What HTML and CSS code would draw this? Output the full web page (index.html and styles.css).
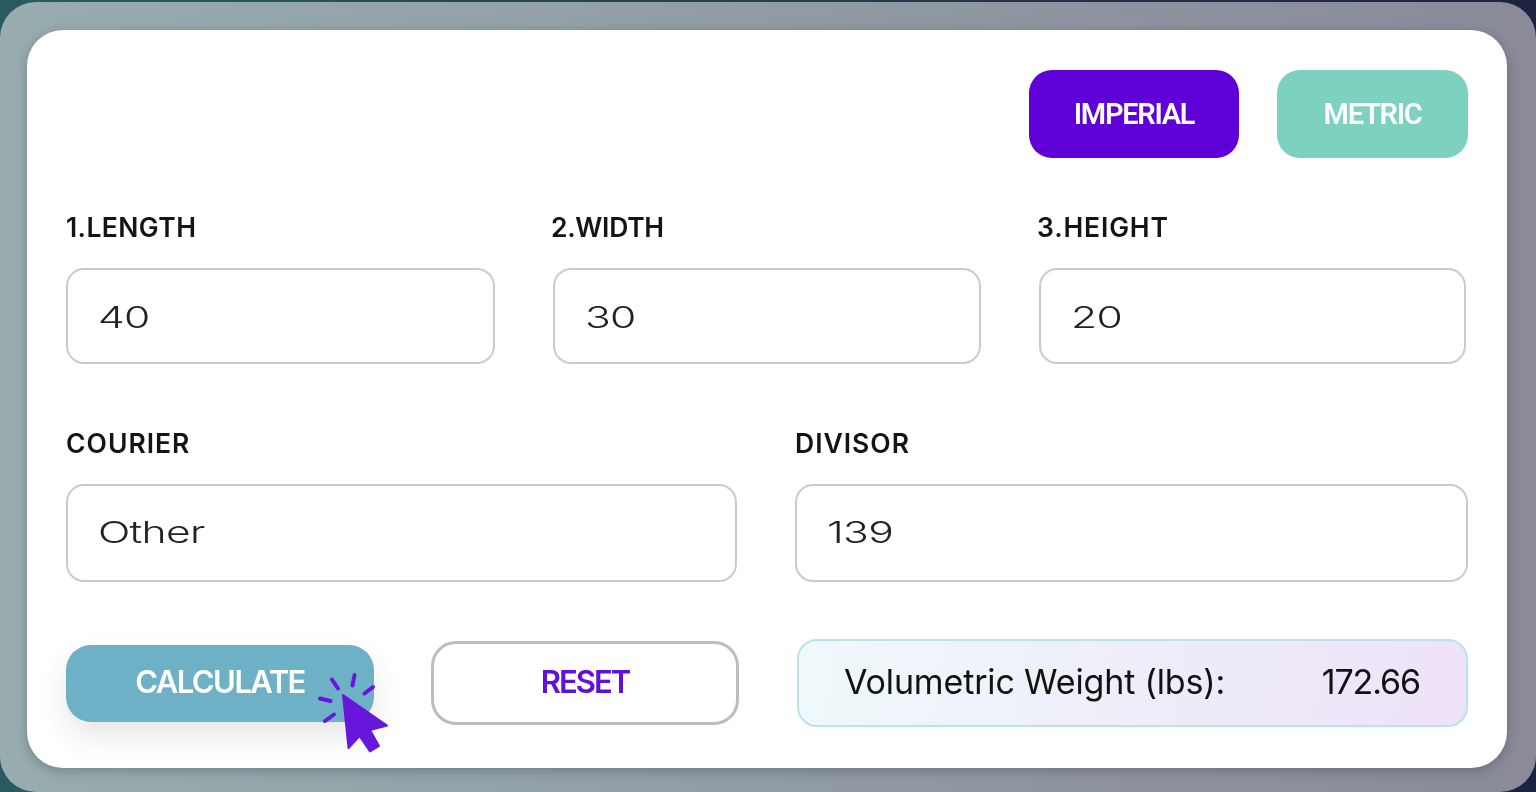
FILE: index.html
```html
<!DOCTYPE html>
<html lang="en">
<head>
<meta charset="utf-8">
<title>Volumetric Weight Calculator</title>
<link rel="stylesheet" href="styles.css">
</head>
<body>
<div class="frame">
  <main class="card">
    <div class="units">
      <button class="unit imperial"><span>IMPERIAL</span></button>
      <button class="unit metric"><span>METRIC</span></button>
    </div>
    <div class="dims">
      <div class="field"><div class="label">1.LENGTH</div><div class="input"><span class="val">40</span></div></div>
      <div class="field"><div class="label shift narrow">2.WIDTH</div><div class="input"><span class="val">30</span></div></div>
      <div class="field"><div class="label shift wide">3.HEIGHT</div><div class="input"><span class="val">20</span></div></div>
    </div>
    <div class="opts">
      <div class="field"><div class="label wider">COURIER</div><div class="input tall"><span class="val">Other</span></div></div>
      <div class="field"><div class="label wider">DIVISOR</div><div class="input tall"><span class="val">139</span></div></div>
    </div>
    <div class="actions">
      <div class="btns">
        <button class="calc"><span>CALCULATE</span>
          <svg class="cursor" viewBox="0 0 80 85" width="80" height="85" aria-hidden="true">
            <path d="M28 25L72 55.500L55 60L64 76L55 81.500L44.500 66L33.500 78Z" fill="#6717db" stroke="#6717db" stroke-width="2" stroke-linejoin="round"/>
            <g stroke="#6717db" stroke-width="4" stroke-linecap="round" fill="none">
              <path d="M17 9.500L23 18.500"/>
              <path d="M39.500 5L37.500 15.500"/>
              <path d="M58 17L49.500 23.500"/>
              <path d="M5 28.500L15.500 31"/>
              <path d="M19 44.500L10 51"/>
            </g>
          </svg>
        </button>
        <button class="reset"><span>RESET</span></button>
      </div>
      <div class="result"><span class="rl">Volumetric Weight (lbs):</span><span class="rv">172.66</span></div>
    </div>
  </main>
</div>
</body>
</html>
```
FILE: styles.css
```css
* { box-sizing: border-box; }
html, body { margin: 0; height: 792px; overflow: hidden; }
body {
  background: linear-gradient(90deg, #2c5a63 0%, #1b2340 100%);
  padding-top: 2px;
  font-family: Inter, "Liberation Sans", sans-serif;
}
.frame {
  height: 790px;
  border-radius: 36px;
  padding: 28px 29px 24px 27px;
  background: linear-gradient(90deg, #98adb0 0%, #8a8a98 100%);
}
.card {
  height: 738px;
  background: #fff;
  border-radius: 36px;
  padding: 40px 39px 0 39px;
  box-shadow: 0 3px 12px rgba(40, 50, 60, .32);
  filter: blur(.45px);
}
.units { display: flex; justify-content: flex-end; gap: 38px; height: 88px; }
button { border: 0; padding: 0; font: inherit; display: block; }
.unit {
  height: 88px; border-radius: 23px; color: #fff;
  font-family: Roboto, sans-serif; font-weight: 600; font-size: 29px; letter-spacing: -1.300px;
}
.imperial { width: 210px; background: #5e00d7; }
.metric { width: 191px; background: #7dd2bf; }
.dims { display: grid; grid-template-columns: 429px 428px 427px; gap: 58px; margin-top: 54px; }
.opts { display: grid; grid-template-columns: 671px 673px; gap: 58px; margin-top: 64px; }
.label {
  height: 30px; line-height: 30px; font-size: 26.500px; font-weight: 600; color: #141414;
  letter-spacing: .4px; white-space: nowrap; margin-bottom: 26px;
}
.shift { margin-left: -2px; }
.narrow { letter-spacing: -.3px; }
.wide { letter-spacing: .85px; }
.wider { letter-spacing: 1px; }
.input {
  height: 96px; border: 2px solid #cbcbc9; border-radius: 18px; padding: 2px 0 0 30px;
  display: flex; align-items: center; background: #fff;
}
.tall { height: 98px; padding: 0 0 2px 30px; }
.val {
  display: inline-block; font-family: Inter, sans-serif; font-weight: 300; font-size: 30px; color: #222;
  transform: scaleX(1.420); transform-origin: left center; letter-spacing: -.500px;
}
.actions { display: flex; justify-content: space-between; align-items: center; margin-top: 57px; }
.btns { display: flex; align-items: center; gap: 57px; width: 674px; }
.calc {
  position: relative; width: 308px; height: 77px; border-radius: 25px; background: #6eb0c5; color: #fff;
  font-family: Inter, sans-serif; font-weight: 600; font-size: 31px; letter-spacing: -1.550px;
  box-shadow: 0 14px 30px rgba(0, 0, 0, .1); padding-bottom: 3px;
}
.cursor { position: absolute; left: 249px; top: 25px; }
.reset {
  width: 308px; height: 84px; border: 3px solid #bdbdbb; border-radius: 25px; background: #fff; color: #6210dc;
  font-family: Inter, sans-serif; font-weight: 600; font-size: 31px; letter-spacing: -2px; padding-bottom: 3px;
}
.result {
  width: 671px; height: 88px; border: 2px solid #b9e3e8; border-radius: 20px;
  background: linear-gradient(100deg, #eff9fa 0%, #eee2f8 100%);
  display: flex; justify-content: space-between; align-items: center; padding: 0 46px 4px 45px;
  font-size: 34px; color: #111; font-weight: 400;
}
.rl { letter-spacing: -.15px; }
.rv { letter-spacing: -1.100px; }
```
